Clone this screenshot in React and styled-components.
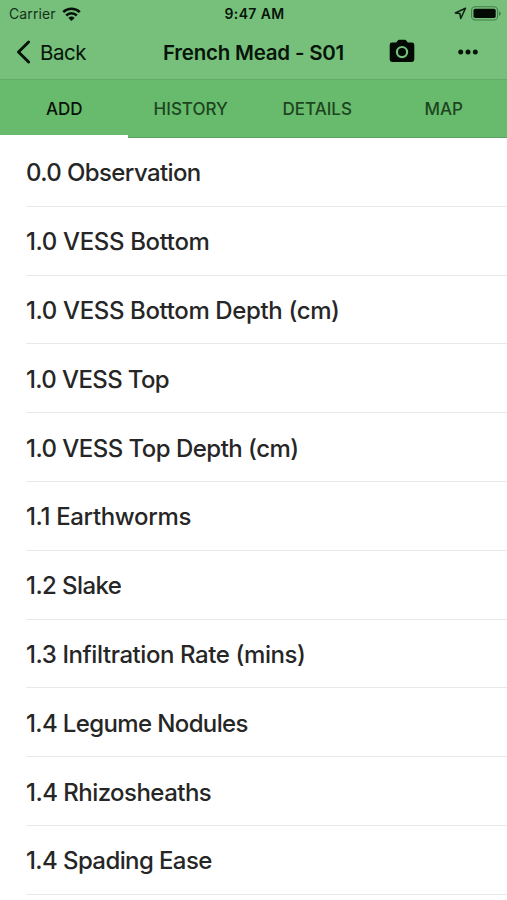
import { useState } from 'react';
import styled, { createGlobalStyle } from 'styled-components';

const GlobalStyle = createGlobalStyle`
    *, *::before, *::after {
        box-sizing: border-box;
    }

    body {
        margin: 0;
        background-color: #fff;
        font-family: Inter, 'Liberation Sans', sans-serif;
        color: #262626;
    }
`;

const Screen = styled.main`
    display: flex;
    flex-direction: column;
    width: 100%;
    height: 900px;
    overflow: hidden;
    background-color: #fff;
`;

const Header = styled.header`
    display: flex;
    flex-direction: column;
    height: 80px;
    background-color: #76c07b;
    border-bottom: solid 1px #65a96b;
    color: #071409;
`;

const StatusBar = styled.div`
    display: grid;
    grid-template-columns: 1fr auto 1fr;
    align-items: center;
    height: 27px;
    padding: 0 5px 0 9px;
`;

const Carrier = styled.span`
    display: flex;
    align-items: center;
    column-gap: 6px;
    color: #14301a;
    font-size: 14px;
    letter-spacing: 0.1px;
`;

const Clock = styled.time`
    font-weight: 600;
    font-size: 14px;
    letter-spacing: 0.35px;
    margin-right: 2px;
`;

const StatusIcons = styled.span`
    display: flex;
    align-items: center;
    justify-content: flex-end;
    column-gap: 4px;
`;

const NavBar = styled.nav`
    display: grid;
    grid-template-columns: 1fr auto 1fr;
    align-items: center;
    height: 49px;
    padding: 0 16px;
`;

const NavButton = styled.button`
    display: flex;
    align-items: center;
    column-gap: 9px;
    padding: 0;
    border: none;
    background: none;
    color: inherit;
    font: inherit;
    font-size: 20.5px;
    letter-spacing: -0.45px;
    cursor: pointer;
`;

const BackLabel = styled.span`
    padding-top: 2px;
`;

const Title = styled.h1`
    margin: 0;
    padding-top: 2px;
    font-size: 20.5px;
    font-weight: 600;
    letter-spacing: -0.22px;
    white-space: nowrap;
`;

const NavActions = styled.div`
    display: flex;
    align-items: center;
    justify-content: flex-end;
    column-gap: 43px;
    margin-right: 13px;
`;

const TabBar = styled.div`
    display: flex;
    height: 58px;
    background-color: #68bb6c;
`;

const Tab = styled.button`
    flex: 1;
    padding: ${({ $active }) => ($active ? '2px 0 0 1px' : '2px 0 2px 0')};
    border: none;
    border-bottom: solid ${({ $active }) => ($active ? '3px #fff' : '1px #5aa360')};
    background: none;
    color: ${({ $active }) => ($active ? '#061207' : '#1d4521')};
    font: inherit;
    font-size: 17px;
    font-weight: 500;
    cursor: pointer;
`;

const List = styled.ul`
    margin: 0;
    padding: 0 0 0 26px;
    list-style: none;
`;

const Row = styled.li`
    display: flex;
    align-items: center;
    height: 68.8px;
    padding-top: 2px;
    border-bottom: solid 1px #e9e9e9;
    font-size: 24px;
    font-weight: 450;
    letter-spacing: ${({ $tracking }) => $tracking}px;
    white-space: nowrap;
`;

const tabs = ['ADD', 'HISTORY', 'DETAILS', 'MAP'];

const observations = [
    { label: '0.0 Observation', tracking: -0.6 },
    { label: '1.0 VESS Bottom', tracking: -0.36 },
    { label: '1.0 VESS Bottom Depth (cm)', tracking: -0.37 },
    { label: '1.0 VESS Top', tracking: -0.62 },
    { label: '1.0 VESS Top Depth (cm)', tracking: -0.53 },
    { label: '1.1 Earthworms', tracking: -0.34 },
    { label: '1.2 Slake', tracking: -0.58 },
    { label: '1.3 Infiltration Rate (mins)', tracking: -0.42 },
    { label: '1.4 Legume Nodules', tracking: -0.63 },
    { label: '1.4 Rhizosheaths', tracking: -0.54 },
    { label: '1.4 Spading Ease', tracking: -0.6 },
];

const WifiIcon = () => (
    <svg width="19" height="14" viewBox="0 0 19 14" fill="none" stroke="#061207" strokeWidth="2.5">
        <path d="M1.2 5.2a11.8 11.8 0 0 1 16.6 0" />
        <path d="M4.2 8.5a7.5 7.5 0 0 1 10.6 0" />
        <path d="M9.5 14 6.4 10.9a4.4 4.4 0 0 1 6.2 0z" fill="#061207" stroke="none" />
    </svg>
);

const LocationIcon = () => (
    <svg width="13" height="13" viewBox="0 0 13 13" fill="none" stroke="#0c1f0e" strokeWidth="1.5" strokeLinejoin="round">
        <path d="M11.5 1.2 1.3 6l4.6.6.8 4.9z" />
    </svg>
);

const BatteryIcon = () => (
    <svg width="31" height="15" viewBox="0 0 31 15">
        <rect x="0.6" y="0.8" width="26" height="13.2" rx="3.6" fill="none" stroke="#477c4b" strokeWidth="1.1" />
        <rect x="2.5" y="2.8" width="22.2" height="9.2" rx="1.8" fill="#030a04" />
        <path d="M28 5.2v4.6c1-.4 1.8-1.2 1.8-2.3S29 5.6 28 5.2z" fill="#477c4b" />
    </svg>
);

const BackIcon = () => (
    <svg width="15" height="24" viewBox="0 0 15 24" fill="none" stroke="#071409" strokeWidth="2.9" strokeLinecap="round" strokeLinejoin="round">
        <path d="M12.6 2 2.5 12l10.1 10" />
    </svg>
);

const CameraIcon = () => (
    <svg width="26" height="26" viewBox="0 0 26 26">
        <path
            fill="#030a04"
            fillRule="evenodd"
            d="M3 3.6h4.2L9 1.3Q9.4.8 10.1.8h5.8q.7 0 1.1.5l1.800 2.300H23q2.300 0 2.300 2.300v14.700q0 2.300-2.300 2.300H3Q.7 22.900.7 20.600V5.900Q.7 3.600 3 3.600zM13 6.900a6.200 6.200 0 1 0 0 12.400 6.200 6.200 0 0 0 0-12.400z"
        />
        <circle cx="13" cy="13.1" r="4" fill="#030a04" />
    </svg>
);

const MoreIcon = () => (
    <svg width="20" height="6" viewBox="0 0 20 6" fill="#071409">
        <circle cx="2.7" cy="3" r="2.5" />
        <circle cx="10" cy="3" r="2.5" />
        <circle cx="17.3" cy="3" r="2.5" />
    </svg>
);

const App = () => {
    const [active, setActive] = useState('ADD');

    return (
        <Screen>
            <GlobalStyle />
            <Header>
                <StatusBar>
                    <Carrier>Carrier <WifiIcon /></Carrier>
                    <Clock>9:47 AM</Clock>
                    <StatusIcons>
                        <LocationIcon />
                        <BatteryIcon />
                    </StatusIcons>
                </StatusBar>
                <NavBar>
                    <NavButton><BackIcon /><BackLabel>Back</BackLabel></NavButton>
                    <Title>French Mead - S01</Title>
                    <NavActions>
                        <NavButton aria-label="Take photo"><CameraIcon /></NavButton>
                        <NavButton aria-label="More"><MoreIcon /></NavButton>
                    </NavActions>
                </NavBar>
            </Header>
            <TabBar>
                {tabs.map((label) => (
                    <Tab
                        key={label}
                        $active={label === active}
                        onClick={() => setActive(label)}
                    >
                        {label}
                    </Tab>
                ))}
            </TabBar>
            <List>
                {observations.map(({ label, tracking }) => (
                    <Row key={label} $tracking={tracking}>{label}</Row>
                ))}
            </List>
        </Screen>
    );
};

export default App;
